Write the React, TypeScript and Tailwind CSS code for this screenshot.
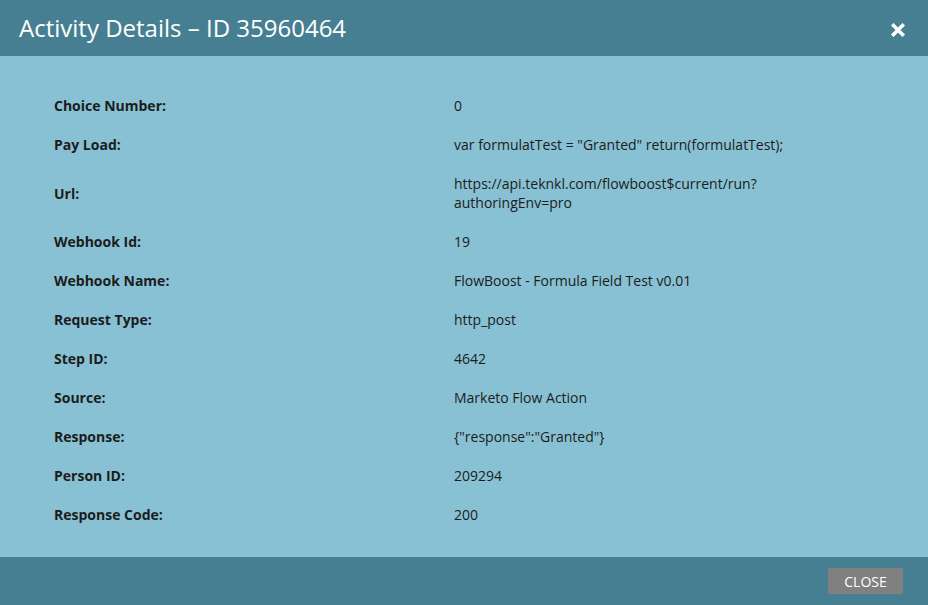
import React from "react";

const rows: [string, string[]][] = [
  ["Choice Number:", ["0"]],
  ["Pay Load:", ['var formulatTest = "Granted" return(formulatTest);']],
  ["Url:", ["https://api.teknkl.com/flowboost$current/run?", "authoringEnv=pro"]],
  ["Webhook Id:", ["19"]],
  ["Webhook Name:", ["FlowBoost - Formula Field Test v0.01"]],
  ["Request Type:", ["http_post"]],
  ["Step ID:", ["4642"]],
  ["Source:", ["Marketo Flow Action"]],
  ["Response:", ['{"response":"Granted"}']],
  ["Person ID:", ["209294"]],
  ["Response Code:", ["200"]],
];

export default function App() {
  return (
    <div
      className="w-[928px] h-[605px] flex flex-col bg-[#88c1d3] overflow-hidden"
      style={{ fontFamily: '"Open Sans", sans-serif' }}
    >
      <div className="h-[56px] shrink-0 bg-[#467f91] flex items-center justify-between pl-[19px] pr-[23px]">
        <div className="text-white text-[24px] leading-none">Activity Details – ID 35960464</div>
        <svg width="14" height="14" viewBox="0 0 14 14" className="mt-[3px]">
          <path d="M2.5 2.5 L11.5 11.5 M11.5 2.5 L2.5 11.5" stroke="white" strokeWidth="3.6" strokeLinecap="square" />
        </svg>
      </div>
      <div className="flex-1 pt-[30px] pl-[54px]">
        {rows.map(([label, vals]) => (
          <div key={label} className="flex items-center py-[10px] text-[14px] leading-[19px] text-[#1c1c1c]">
            <div className="w-[400px] font-bold">{label}</div>
            <div>
              {vals.map((v) => (
                <div key={v}>{v}</div>
              ))}
            </div>
          </div>
        ))}
      </div>
      <div className="h-[48px] shrink-0 bg-[#467f91] flex items-center justify-end pr-[25px]">
        <div className="w-[75px] h-[26px] bg-[#808080] text-white text-[14px] flex items-center justify-center">CLOSE</div>
      </div>
    </div>
  );
}
